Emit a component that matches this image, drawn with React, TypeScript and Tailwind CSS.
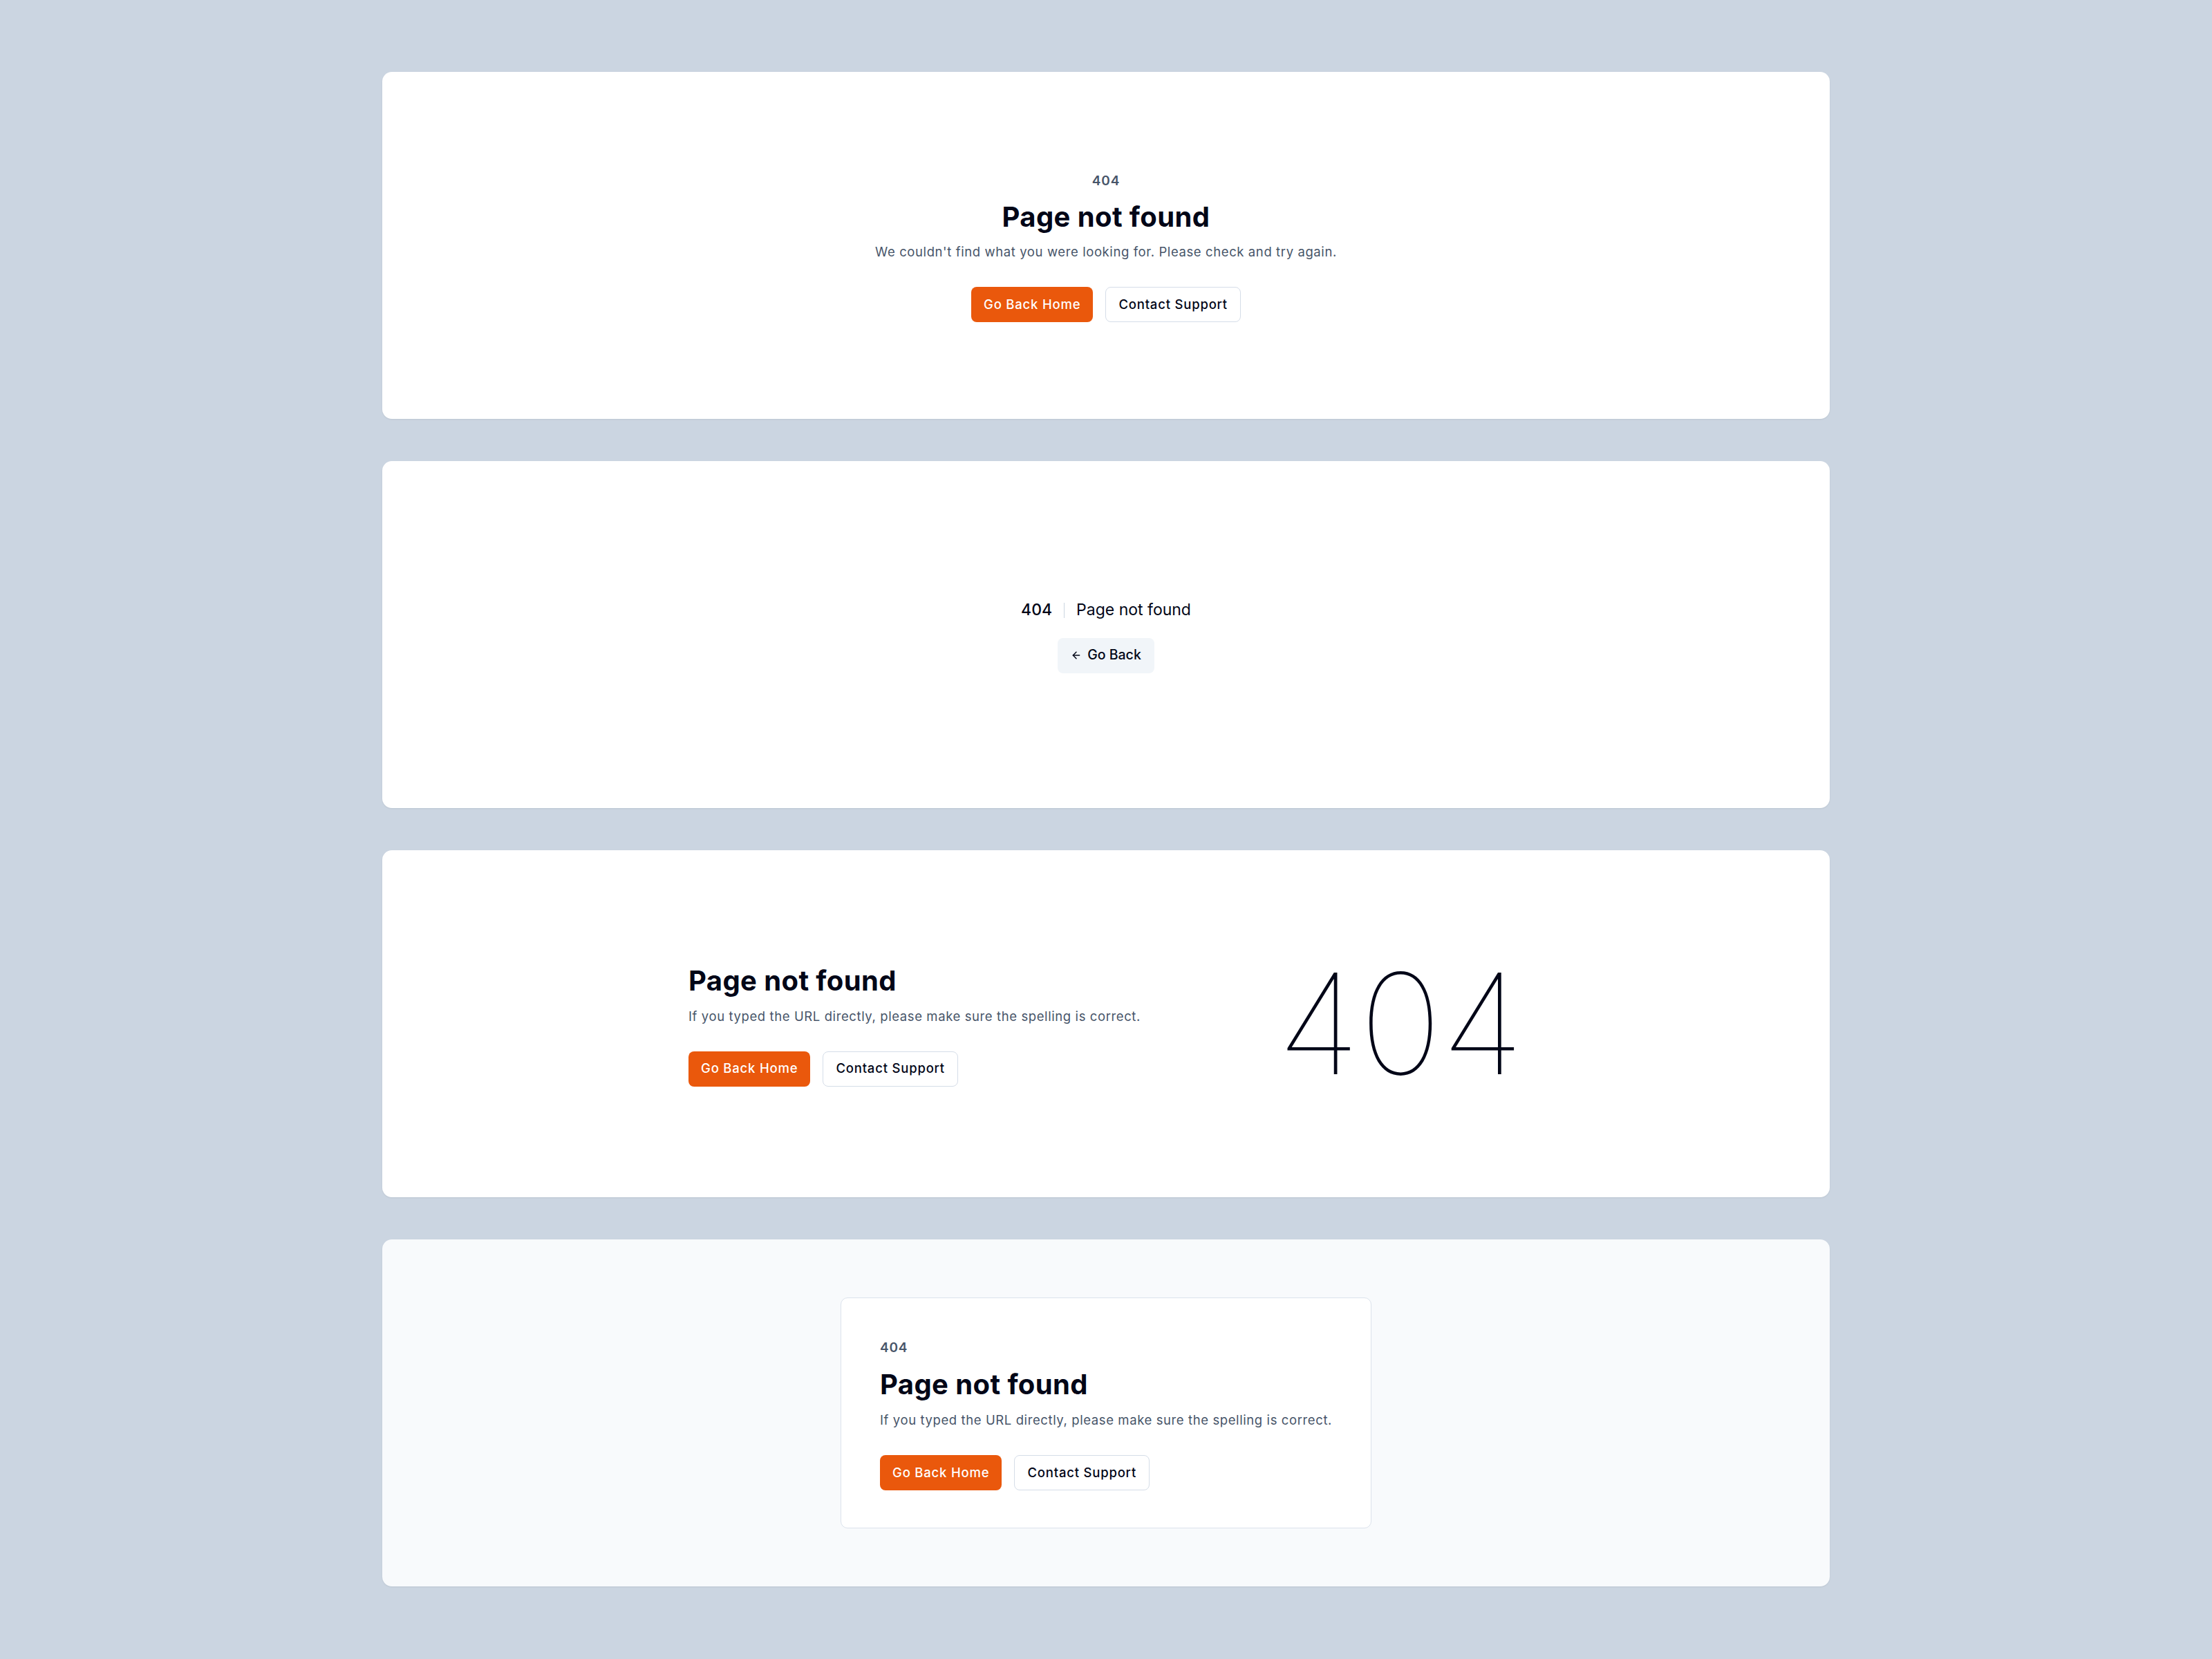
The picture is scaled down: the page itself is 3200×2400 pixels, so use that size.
import { ArrowLeft } from "lucide-react";

const font = { fontFamily: "Inter, 'Noto Sans', sans-serif" };

function PrimaryButton({ children }: { children: React.ReactNode }) {
  return (
    <button className="h-[51px] rounded-[8px] bg-[#ea580c] px-[18px] text-[18.5px] font-medium tracking-[0.8px] text-white">
      {children}
    </button>
  );
}

function OutlineButton({ children }: { children: React.ReactNode }) {
  return (
    <button className="h-[51px] rounded-[8px] border border-[#d5dde8] bg-white px-[18px] text-[18.5px] font-medium tracking-[0.8px] text-[#020617]">
      {children}
    </button>
  );
}

function Actions() {
  return (
    <div className="flex items-center gap-[18px]">
      <PrimaryButton>Go Back Home</PrimaryButton>
      <OutlineButton>Contact Support</OutlineButton>
    </div>
  );
}

function Card({ children, muted }: { children: React.ReactNode; muted?: boolean }) {
  return (
    <div
      className={`flex h-[502px] items-center justify-center rounded-[14px] shadow-[0_1px_2px_rgba(15,23,42,0.08)] ${
        muted ? "bg-[#f8fafc]" : "bg-white"
      }`}
    >
      {children}
    </div>
  );
}

export default function App() {
  return (
    <div className="min-h-screen bg-[#cbd5e1] py-[104px]" style={font}>
      <div className="mx-auto flex w-[2094px] flex-col gap-[61px]">
        {/* Centered */}
        <Card>
          <div className="flex flex-col items-center pt-[4px] text-center">
            <p className="text-[19px] font-semibold leading-[28px] tracking-[0.8px] text-[#475569]">404</p>
            <h1 className="mt-[14px] text-[40px] font-bold leading-[48px] tracking-[0.01em] text-[#020617]">
              Page not found
            </h1>
            <p className="mt-[12px] text-[18.5px] leading-[28px] tracking-[0.6px] text-[#475569]">
              We couldn't find what you were looking for. Please check and try again.
            </p>
            <div className="mt-[37px]">
              <Actions />
            </div>
          </div>
        </Card>

        {/* Minimal */}
        <Card>
          <div className="flex flex-col items-center pt-[4px]">
            <div className="flex h-[32px] items-center text-[23px] text-[#020617]">
              <span className="font-medium">404</span>
              <span className="mx-[17px] h-[22px] w-px bg-[#cbd5e1]" />
              <span>Page not found</span>
            </div>
            <button className="mt-[24px] flex h-[51px] items-center gap-[8px] rounded-[8px] bg-[#f1f5f9] px-[19px] text-[19.5px] font-medium text-[#020617]">
              <ArrowLeft className="h-[16px] w-[16px]" strokeWidth={2.2} />
              Go Back
            </button>
          </div>
        </Card>

        {/* Split */}
        <Card>
          <div className="flex w-[1208px] items-center justify-between">
            <div className="flex flex-col items-start pt-[4px]">
              <h1 className="text-[40px] font-bold leading-[48px] tracking-[0.01em] text-[#020617]">
                Page not found
              </h1>
              <p className="mt-[13px] text-[18.5px] leading-[28px] tracking-[0.6px] text-[#475569]">
                If you typed the URL directly, please make sure the spelling is correct.
              </p>
              <div className="mt-[37px]">
                <Actions />
              </div>
            </div>
            <div className="text-[202px] font-thin leading-none tracking-[-1px] text-[#020617]">404</div>
          </div>
        </Card>

        {/* Boxed */}
        <Card muted>
          <div className="rounded-[10px] border border-[#dbe2ec] bg-white px-[56px] pb-[54px] pt-[58px]">
            <p className="text-[19px] font-semibold leading-[28px] tracking-[0.8px] text-[#475569]">404</p>
            <h1 className="mt-[15px] text-[40px] font-bold leading-[48px] tracking-[0.01em] text-[#020617]">
              Page not found
            </h1>
            <p className="mt-[13px] text-[18.5px] leading-[28px] tracking-[0.6px] text-[#475569]">
              If you typed the URL directly, please make sure the spelling is correct.
            </p>
            <div className="mt-[37px]">
              <Actions />
            </div>
          </div>
        </Card>
      </div>
    </div>
  );
}
